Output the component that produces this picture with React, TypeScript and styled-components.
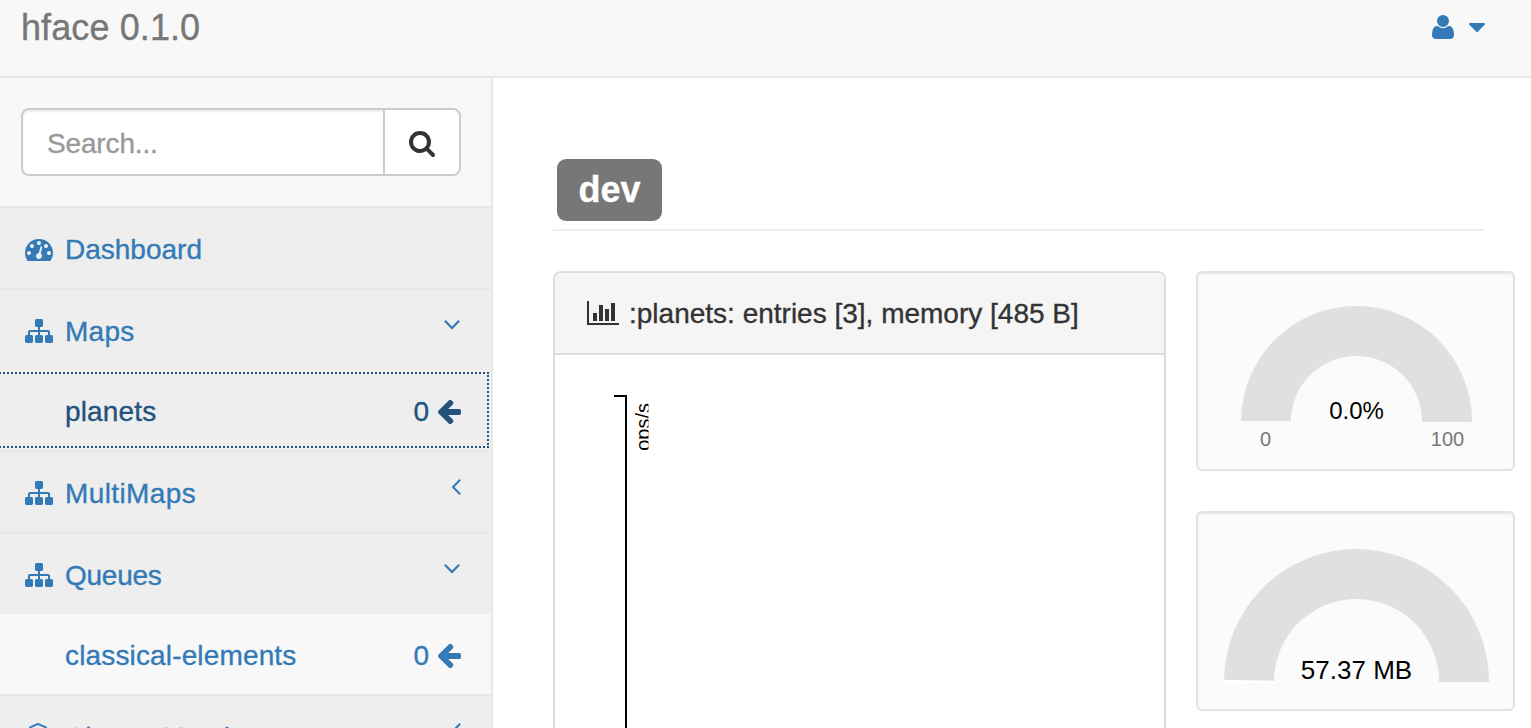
import React from "react";
import styled, { createGlobalStyle } from "styled-components";

const GlobalStyle = createGlobalStyle`
  *, *::before, *::after { box-sizing: border-box; }
  html, body { margin: 0; height: 728px; overflow: hidden; background: #fff; }
  body {
    font-family: "Liberation Sans", Arial, sans-serif;
    font-size: 28px;
    line-height: 40px;
    color: #333;
    -webkit-text-stroke: 0.35px currentColor;
  }
`;

const glyphs = {
  tachometer:
    "M384 1152q0-53-37.5-90.5t-90.5-37.5-90.5 37.5-37.5 90.5 37.5 90.5 90.5 37.5 90.5-37.5 37.5-90.5zm192-448q0-53-37.5-90.5t-90.5-37.5-90.5 37.5-37.5 90.5 37.5 90.5 90.5 37.5 90.5-37.5 37.5-90.5zm428 481l101-382q6-26-7.5-48.5t-38.5-29.5-48 6.5-30 39.5l-101 382q-60 5-107 43.5t-63 98.5q-20 77 20 146t117 89 146-20 89-117q16-60-6-117t-72-91zm660-33q0-53-37.5-90.5t-90.5-37.5-90.5 37.5-37.5 90.5 37.5 90.5 90.5 37.5 90.5-37.5 37.5-90.5zm-640-640q0-53-37.5-90.5t-90.5-37.5-90.5 37.5-37.5 90.5 37.5 90.5 90.5 37.5 90.5-37.5 37.5-90.5zm448 192q0-53-37.5-90.5t-90.5-37.5-90.5 37.5-37.5 90.5 37.5 90.5 90.5 37.5 90.5-37.5 37.5-90.5zm320 448q0 261-141 483-19 29-54 29h-1402q-35 0-54-29-141-221-141-483 0-182 71-348t191-286 286-191 348-71 348 71 286 191 191 286 71 348z",
  sitemap:
    "M1792 1248v320q0 40-28 68t-68 28h-320q-40 0-68-28t-28-68v-320q0-40 28-68t68-28h96v-192h-512v192h96q40 0 68 28t28 68v320q0 40-28 68t-68 28h-320q-40 0-68-28t-28-68v-320q0-40 28-68t68-28h96v-192h-512v192h96q40 0 68 28t28 68v320q0 40-28 68t-68 28h-320q-40 0-68-28t-28-68v-320q0-40 28-68t68-28h96v-192q0-52 38-90t90-38h512v-192h-96q-40 0-68-28t-28-68v-320q0-40 28-68t68-28h320q40 0 68 28t28 68v320q0 40-28 68t-68 28h-96v192h512q52 0 90 38t38 90v192h96q40 0 68 28t28 68z",
  cubes:
    "M640 1632l384-192v-314l-384 164v342zm-64-454l404-173-404-173-404 173zm1088 454l384-192v-314l-384 164v342zm-64-454l404-173-404-173-404 173zm-448-293l384-165v-266l-384 164v267zm-64-379l441-189-441-189-441 189zm1088 518v416q0 36-19 67t-52 47l-448 224q-25 14-57 14t-57-14l-448-224q-4-2-7-4-2 2-7 4l-448 224q-25 14-57 14t-57-14l-448-224q-33-16-52-47t-19-67v-416q0-38 21.5-70t56.5-48l434-186v-400q0-38 21.5-70t56.5-48l448-192q23-10 50-10t50 10l448 192q35 16 56.5 48t21.5 70v400l434 186q36 16 57 48t21 70z",
  user:
    "M1600 1405q0 120-73 189.5t-194 69.5h-874q-121 0-194-69.5t-73-189.5q0-53 3.5-103.5t14-109 26.5-108.5 43-97.5 62-81 85.5-53.5 111.5-20q9 0 42 21.5t74.5 48 108 48 133.5 21.5 133.5-21.5 108-48 74.5-48 42-21.5q61 0 111.5 20t85.5 53.5 62 81 43 97.5 26.5 108.5 14 109 3.5 103.5zm-320-893q0 159-112.5 271.5t-271.5 112.5-271.5-112.5-112.5-271.5 112.5-271.5 271.5-112.5 271.5 112.5 112.5 271.5z",
  caretDown:
    "M1408 704q0 26-19 45l-448 448q-19 19-45 19t-45-19l-448-448q-19-19-19-45t19-45 45-19h896q26 0 45 19t19 45z",
  search:
    "M1216 832q0-185-131.5-316.5t-316.5-131.5-316.5 131.5-131.5 316.5 131.5 316.5 316.5 131.5 316.5-131.5 131.5-316.5zm512 832q0 52-38 90t-90 38q-54 0-90-38l-343-342q-179 124-399 124-143 0-273.5-55.5t-225-150-150-225-55.5-273.5 55.5-273.5 150-225 225-150 273.5-55.5 273.5 55.5 225 150 150 225 55.5 273.5q0 220-124 399l343 343q37 37 37 90z",
  angleDown:
    "M1395 736q0 13-10 23l-466 466q-10 10-23 10t-23-10l-466-466q-10-10-10-23t10-23l50-50q10-10 23-10t23 10l393 393 393-393q10-10 23-10t23 10l50 50q10 10 10 23z",
  angleLeft:
    "M1203 544q0 13-10 23l-393 393 393 393q10 10 10 23t-10 23l-50 50q-10 10-23 10t-23-10l-466-466q-10-10-10-23t10-23l466-466q10-10 23-10t23 10l50 50q10 10 10 23z",
  arrowLeft:
    "M1664 896v128q0 53-32.5 90.5t-84.5 37.5h-704l293 294q38 36 38 90t-38 90l-75 76q-37 37-90 37-52 0-91-37l-651-652q-37-37-37-90 0-52 37-91l651-650q38-38 91-38 52 0 90 38l75 74q38 38 38 91t-38 91l-293 293h704q52 0 84.5 37.5t32.5 90.5z",
  barChart:
    "M640 896v512h-256v-512h256zm384-512v1024h-256v-1024h256zm1024 1152v128h-2048v-1536h128v1408h1920zm-640-896v768h-256v-768h256zm384-384v1152h-256v-1152h256z",
};

type GlyphName = keyof typeof glyphs;

const GlyphSvg = styled.svg`
  display: block;
  flex: none;
  fill: currentColor;
`;

/* Icons share a 64-units-per-pixel grid; from/span pick the horizontal extent. */
function Glyph({ name, from = 0, span = 1792 }: { name: GlyphName; from?: number; span?: number }) {
  return (
    <GlyphSvg width={span / 64} height={28} viewBox={`${from} 0 ${span} 1792`} aria-hidden="true">
      <path d={glyphs[name]} />
    </GlyphSvg>
  );
}

const Page = styled.div`
  display: flex;
  flex-direction: column;
  width: 1531px;
  height: 728px;
  overflow: hidden;
`;

const TopBar = styled.header`
  flex: none;
  display: flex;
  justify-content: space-between;
  height: 78px;
  padding: 7px 46px 0 21px;
  background: #f8f8f8;
  border-bottom: 2px solid #e7e7e7;
`;

const Brand = styled.a`
  padding-top: 1px;
  font-size: 36px;
  letter-spacing: 0.1px;
  color: #777;
`;

const UserMenu = styled.a`
  display: flex;
  gap: 12px;
  padding-top: 6px;
  color: #337ab7;
`;

const Body = styled.div`
  flex: 1;
  min-height: 0;
  display: flex;
`;

const Sidebar = styled.nav`
  flex: none;
  width: 493px;
  overflow: hidden;
  background: #f8f8f8;
  border-right: 2px solid #e7e7e7;
`;

const SearchRow = styled.div`
  display: flex;
  padding: 30px 30px 30px 21px;
  border-bottom: 2px solid #e7e7e7;
`;

const SearchInput = styled.input`
  flex: 1;
  min-width: 0;
  height: 68px;
  padding: 3px 24px 0;
  font: inherit;
  letter-spacing: -0.15px;
  color: #555;
  background: #fff;
  border: 2px solid #ccc;
  border-right: 0;
  border-radius: 8px 0 0 8px;
  box-shadow: inset 0 2px 2px rgba(0, 0, 0, 0.075);
  outline: none;
  &::placeholder { color: #999; opacity: 1; }
`;

const SearchButton = styled.button`
  width: 78px;
  height: 68px;
  padding: 2px 0 0 23px;
  color: #333;
  background: #fff;
  border: 2px solid #ccc;
  border-radius: 0 8px 8px 0;
`;

const NavGroup = styled.div`
  border-bottom: 2px solid #e7e7e7;
`;

const NavLink = styled.a`
  display: flex;
  height: 80px;
  padding: 22px 30px 0 21px;
  color: #337ab7;
  background: #eee;
`;

const NavIcon = styled.span`
  display: flex;
  justify-content: center;
  width: 36px;
  margin-right: 8px;
  padding-top: 5px;
`;

const NavLabel = styled.span<{ $tracking?: number }>`
  flex: 1;
  letter-spacing: ${(p) => p.$tracking ?? 0}px;
`;

const NavChevron = styled.span`
  margin-top: -2px;
`;

const SubLink = styled.a<{ $focused?: boolean }>`
  display: flex;
  height: 80px;
  padding: 22px 30px 0 65px;
  color: ${(p) => (p.$focused ? "#23527c" : "#337ab7")};
  background: ${(p) => (p.$focused ? "#eee" : "#f8f8f8")};
  outline: ${(p) => (p.$focused ? "2px dotted #23527c" : "none")};
  outline-offset: -4px;
`;

const FocusedSlot = styled.div`
  height: 80px;
  margin-left: -6px;
  background: #eee;
  ${SubLink} { padding-left: 71px; }
`;

const SubCount = styled.span`
  display: flex;
  gap: 8px;
`;

const ArrowSlot = styled.span`
  padding-top: 5px;
`;

const Main = styled.main`
  flex: 1;
  min-width: 0;
  padding: 81px 16px 0 60px;
`;

const PageHeading = styled.h1`
  display: flex;
  width: 932px;
  height: 72px;
  margin: 0 0 40px;
  padding: 0 4px 8px;
  border-bottom: 2px solid #eee;
`;

const ClusterBadge = styled.span`
  width: 105px;
  height: 62px;
  font-size: 36px;
  font-weight: 700;
  line-height: 62px;
  text-align: center;
  color: #fff;
  background: #777;
  border-radius: 9px;
`;

const Columns = styled.div`
  display: flex;
  align-items: flex-start;
  gap: 30px;
`;

const Panel = styled.section`
  width: 613px;
  height: 500px;
  border: 2px solid #ddd;
  border-radius: 8px;
  overflow: hidden;
`;

const PanelHeader = styled.div`
  display: flex;
  gap: 10px;
  height: 82px;
  padding: 21px 32px 0;
  background: #f5f5f5;
  border-bottom: 2px solid #ddd;
  white-space: nowrap;
`;

const PanelIcon = styled.span`
  padding-top: 5px;
`;

const ChartArea = styled.svg`
  display: block;
  width: 609px;
  height: 414px;
  font-size: 20px;
`;

const Gauges = styled.div`
  display: flex;
  flex-direction: column;
  gap: 40px;
`;

const Well = styled.section`
  width: 319px;
  height: 200px;
  background: #fbfbfb;
  border: 2px solid #e3e3e3;
  border-radius: 6px;
  box-shadow: inset 0 2px 2px rgba(0, 0, 0, 0.05);
`;

const GaugeSvg = styled.svg`
  display: block;
  width: 315px;
  height: 196px;
`;

interface GaugeProps {
  cy: number;
  radius: number;
  value: string;
  valueSize: number;
  valueY: number;
  range?: [string, string];
  marker?: boolean;
}

function Gauge({ cy, radius, value, valueSize, valueY, range, marker }: GaugeProps) {
  const cx = 158.5;
  const inner = radius - 50;
  return (
    <Well>
      <GaugeSvg viewBox="0 0 315 196">
        <path
          fill="#e0e0e0"
          d={`M${cx - radius} ${cy - 1}A${radius} ${radius} 0 0 1 ${cx + radius} ${cy}H${cx + inner}A${inner} ${inner} 0 0 0 ${cx - inner} ${cy - 1}Z`}
        />
        {marker && <path fill="#fff" d={`M${cx - radius - 1} ${cy - 2}L${cx - inner} ${cy - 1.5}V${cy + 1}H${cx - radius - 1}Z`} />}
        <text x={cx} y={valueY} textAnchor="middle" fontSize={valueSize} fill="#000">{value}</text>
        {range && (
          <>
            <text x={67.5} y={173} textAnchor="middle" fontSize={20} fill="#777">{range[0]}</text>
            <text x={249.5} y={173} textAnchor="middle" fontSize={20} fill="#777">{range[1]}</text>
          </>
        )}
      </GaugeSvg>
    </Well>
  );
}

interface NavItemProps {
  icon: GlyphName;
  label: string;
  tracking?: number;
  chevron?: "open" | "closed";
}

function NavItem({ icon, label, tracking, chevron }: NavItemProps) {
  return (
    <NavLink>
      <NavIcon>
        <Glyph name={icon} span={icon === "cubes" ? 2304 : 1792} />
      </NavIcon>
      <NavLabel $tracking={tracking}>{label}</NavLabel>
      {chevron && (
        <NavChevron>
          {chevron === "open" ? (
            <Glyph name="angleDown" from={384} span={1088} />
          ) : (
            <Glyph name="angleLeft" from={576} span={640} />
          )}
        </NavChevron>
      )}
    </NavLink>
  );
}

interface SubItemProps {
  label: string;
  count: number;
  tracking?: number;
  focused?: boolean;
}

function SubItem({ label, count, tracking, focused }: SubItemProps) {
  return (
    <SubLink $focused={focused}>
      <NavLabel $tracking={tracking}>{label}</NavLabel>
      <SubCount>
        {count}
        <ArrowSlot><Glyph name="arrowLeft" from={128} span={1536} /></ArrowSlot>
      </SubCount>
    </SubLink>
  );
}

export default function App() {
  return (
    <Page>
      <GlobalStyle />
      <TopBar>
        <Brand>hface 0.1.0</Brand>
        <UserMenu>
          <Glyph name="user" from={192} span={1408} />
          <Glyph name="caretDown" from={192} span={1216} />
        </UserMenu>
      </TopBar>
      <Body>
        <Sidebar>
          <SearchRow>
            <SearchInput placeholder="Search..." />
            <SearchButton aria-label="Search"><Glyph name="search" /></SearchButton>
          </SearchRow>
          <NavGroup>
            <NavItem icon="tachometer" label="Dashboard" />
          </NavGroup>
          <NavGroup>
            <NavItem icon="sitemap" label="Maps" tracking={0.3} chevron="open" />
            <FocusedSlot><SubItem label="planets" count={0} tracking={0.15} focused /></FocusedSlot>
          </NavGroup>
          <NavGroup>
            <NavItem icon="sitemap" label="MultiMaps" tracking={0.4} chevron="closed" />
          </NavGroup>
          <NavGroup>
            <NavItem icon="sitemap" label="Queues" tracking={-0.25} chevron="open" />
            <SubItem label="classical-elements" count={0} tracking={0.15} />
          </NavGroup>
          <NavGroup>
            <NavItem icon="cubes" label="Cluster Members" chevron="closed" />
          </NavGroup>
        </Sidebar>
        <Main>
          <PageHeading><ClusterBadge>dev</ClusterBadge></PageHeading>
          <Columns>
            <Panel>
              <PanelHeader>
                <PanelIcon><Glyph name="barChart" span={2048} /></PanelIcon>
                <span>:planets: entries [3], memory [485 B]</span>
              </PanelHeader>
              <ChartArea viewBox="0 0 609 414">
                <path d="M59 41H71V414" fill="none" stroke="#000" strokeWidth={2} />
                <svg x="73" y="40" width="20.5" height="70" overflow="hidden">
                  <text transform="translate(22 8) rotate(-90)" textAnchor="end" fill="#000">ops/s</text>
                </svg>
              </ChartArea>
            </Panel>
            <Gauges>
              <Gauge cy={149} radius={115.5} value="0.0%" valueSize={24} valueY={146} range={["0", "100"]} />
              <Gauge cy={169} radius={132.5} value="57.37 MB" valueSize={26} valueY={166} marker />
            </Gauges>
          </Columns>
        </Main>
      </Body>
    </Page>
  );
}
